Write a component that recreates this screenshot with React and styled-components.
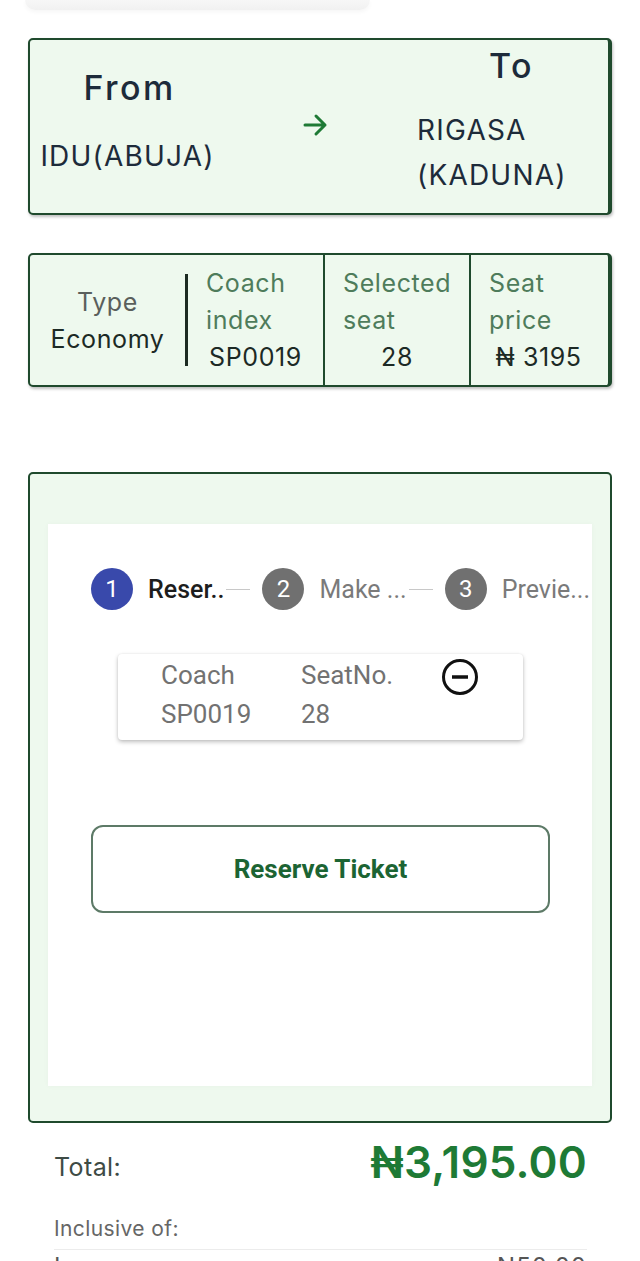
import React from 'react'
import styled, { createGlobalStyle } from 'styled-components'

const GlobalStyle = createGlobalStyle`
  body {
    margin: 0;
    background: #ffffff;
    font-family: "Inter", "Open Sans", sans-serif;
  }
`

const App = () => {
  return (
    <>
      <GlobalStyle />
      <Page>
        <TopShade />

        <RouteCard>
          <FromCol>
            <BigLabel>From</BigLabel>
            <Place>IDU(ABUJA)</Place>
          </FromCol>
          <ArrowCol>
            <svg width="28" height="24" viewBox="0 0 28 24">
              <path d="M3 12 H23 M14 3 L23 12 L14 21" fill="none" stroke="#1e7a35" strokeWidth="3" strokeLinecap="round" strokeLinejoin="round" />
            </svg>
          </ArrowCol>
          <ToCol>
            <ToLabel>To</ToLabel>
            <Place>RIGASA</Place>
            <Place>(KADUNA)</Place>
          </ToCol>
        </RouteCard>

        <InfoCard>
          <TypeCell>
            <TypeLabel>Type</TypeLabel>
            <Value>Economy</Value>
          </TypeCell>
          <Divider />
          <InfoCell w={135}>
            <Label>Coach</Label>
            <Label>index</Label>
            <Value center>SP0019</Value>
          </InfoCell>
          <InfoCell w={144} line>
            <Label>Selected</Label>
            <Label>seat</Label>
            <Value center>28</Value>
          </InfoCell>
          <InfoCell w={135} line>
            <Label>Seat</Label>
            <Label>price</Label>
            <Value center>₦ 3195</Value>
          </InfoCell>
        </InfoCard>

        <ReserveCard>
          <WhiteCard>
            <Stepper>
              <Step>
                <StepDot active>1</StepDot>
                <StepText active>Reser..</StepText>
              </Step>
              <Connector />
              <Step>
                <StepDot>2</StepDot>
                <StepText>Make ...</StepText>
              </Step>
              <Connector />
              <Step>
                <StepDot>3</StepDot>
                <StepText>Previe...</StepText>
              </Step>
            </Stepper>

            <SeatCard>
              <SeatCol w={140}>
                <SeatText>Coach</SeatText>
                <SeatText>SP0019</SeatText>
              </SeatCol>
              <SeatCol w={139}>
                <SeatText>SeatNo.</SeatText>
                <SeatText>28</SeatText>
              </SeatCol>
              <RemoveIcon width="40" height="40" viewBox="0 0 40 40">
                <circle cx="20" cy="20" r="16.5" fill="none" stroke="#111" strokeWidth="3" />
                <path d="M12 20 H28" stroke="#111" strokeWidth="3.5" />
              </RemoveIcon>
            </SeatCard>

            <ReserveButton>Reserve Ticket</ReserveButton>
          </WhiteCard>
        </ReserveCard>

        <Summary>
          <TotalRow>
            <TotalLabel>Total:</TotalLabel>
            <TotalAmount>₦3,195.00</TotalAmount>
          </TotalRow>
          <Inclusive>Inclusive of:</Inclusive>
          <FeeRow>
            <span>Levy</span>
            <span>₦50.00</span>
          </FeeRow>
        </Summary>
      </Page>
    </>
  )
}

export default App

const Page = styled.div`
width: 640px;
height: 1261px;
overflow: hidden;
padding: 0 28px;
box-sizing: border-box;
`

const TopShade = styled.div`
width: 345px;
height: 10px;
margin-left: -3px;
border-radius: 0 0 10px 10px;
background: linear-gradient(#f7f7f7, #f1f1f1);
box-shadow: 0 2px 4px rgba(0,0,0,0.04);
`

const GreenBox = styled.div`
box-sizing: border-box;
background: #eef9ee;
border: 2px solid #1f4a2d;
border-right-width: 4px;
border-radius: 5px;
box-shadow: 1px 2px 3px rgba(0,0,0,0.25);
`

const RouteCard = styled(GreenBox)`
margin-top: 28px;
height: 177px;
display: grid;
grid-template-columns: 195px 192px 1fr;
align-items: center;
padding-bottom: 6px;
`

const FromCol = styled.div`
display: flex;
flex-direction: column;
align-items: center;
`

const BigLabel = styled.div`
font-size: 34px;
line-height: 40px;
color: #1d2b3a;
font-weight: 500;
letter-spacing: 2.4px;
margin-bottom: 26px;
margin-left: 4px;
`

const Place = styled.div`
font-size: 28px;
line-height: 45px;
color: #1d2b3a;
letter-spacing: 1.2px;
white-space: nowrap;
`

const ArrowCol = styled.div`
display: flex;
justify-content: center;
padding-right: 10px;
padding-top: 2px;
`

const ToCol = styled.div`
display: flex;
flex-direction: column;
align-items: flex-start;
margin-top: -4px;
`

const ToLabel = styled(BigLabel)`
margin: 0 0 22px 72px;
`

const InfoCard = styled(GreenBox)`
margin-top: 38px;
height: 134px;
display: flex;
align-items: center;
`

const TypeCell = styled.div`
width: 155px;
display: flex;
flex-direction: column;
align-items: center;
padding-top: 2px;
`

const Divider = styled.div`
width: 3px;
height: 92px;
background: #1c2b22;
`

const InfoCell = styled.div`
box-sizing: border-box;
align-self: stretch;
display: flex;
flex-direction: column;
justify-content: center;
padding-left: 18px;
border-left: ${p => (p.line ? '2px solid #1f4a2d' : 'none')};
width: ${p => (p.line ? p.w + 2 : p.w)}px;
`

const Label = styled.div`
font-size: 25px;
line-height: 37px;
letter-spacing: 0.6px;
color: #4e7c5b;
white-space: nowrap;
`

const TypeLabel = styled(Label)`
color: #5a5f5c;
`

const Value = styled.div`
font-size: 25px;
line-height: 37px;
letter-spacing: 0.6px;
color: #1c2a25;
white-space: nowrap;
align-self: ${p => (p.center ? 'center' : 'auto')};
margin-left: ${p => (p.center ? '-18px' : '0')};
`

const ReserveCard = styled(GreenBox)`
margin-top: 85px;
height: 651px;
border-right-width: 2px;
box-shadow: none;
padding: 50px 18px 35px;
`

const WhiteCard = styled.div`
height: 100%;
background: #ffffff;
box-shadow: 0 0 6px rgba(0,0,0,0.03);
padding: 44px 2px 0 43px;
box-sizing: border-box;
font-family: "Roboto", sans-serif;
`

const Stepper = styled.div`
display: flex;
align-items: center;
height: 42px;
`

const Step = styled.div`
display: flex;
align-items: center;
gap: 15px;
`

const StepDot = styled.div`
width: 42px;
height: 42px;
border-radius: 50%;
background: ${p => (p.active ? '#3949ab' : '#707070')};
color: #fff;
display: flex;
align-items: center;
justify-content: center;
font-size: 24px;
`

const StepText = styled.div`
font-size: 25px;
color: ${p => (p.active ? '#1d1d1d' : '#7a7a7a')};
font-weight: ${p => (p.active ? 500 : 400)};
white-space: nowrap;
`

const Connector = styled.div`
flex: 1;
height: 1px;
background: #c8c8c8;
margin: 0 12px 0 2px;
`

const SeatCard = styled.div`
margin: 44px 0 0 27px;
width: 405px;
height: 86px;
box-sizing: border-box;
background: #fff;
border-radius: 4px;
box-shadow: 0 2px 4px rgba(0,0,0,0.25), 0 0 2px rgba(0,0,0,0.08);
display: flex;
align-items: flex-start;
padding: 2px 0 0 43px;
`

const SeatCol = styled.div`
width: ${p => p.w}px;
`

const SeatText = styled.div`
font-size: 26px;
line-height: 39px;
color: #727272;
`

const RemoveIcon = styled.svg`
margin-top: 1px;
`

const ReserveButton = styled.div`
margin-top: 85px;
width: 459px;
height: 88px;
box-sizing: border-box;
border: 2px solid #5d7a67;
border-radius: 12px;
display: flex;
align-items: center;
justify-content: center;
font-size: 26px;
font-weight: 700;
color: #1c6433;
`

const Summary = styled.div`
padding: 0 25px 0 26px;
`

const TotalRow = styled.div`
display: flex;
justify-content: space-between;
align-items: flex-end;
margin-top: 12px;
`

const TotalLabel = styled.div`
font-size: 25px;
color: #3e4b45;
letter-spacing: 0.4px;
padding-bottom: 7px;
`

const TotalAmount = styled.div`
font-size: 44px;
font-weight: 600;
color: #1e7a35;
letter-spacing: 0.2px;
`

const Inclusive = styled.div`
margin-top: 27px;
font-size: 21px;
letter-spacing: 0.4px;
color: #666;
padding-bottom: 8px;
border-bottom: 1px solid #ececec;
`

const FeeRow = styled.div`
display: flex;
justify-content: space-between;
margin-top: 2px;
font-size: 24px;
line-height: 30px;
letter-spacing: 1px;
color: #555;
`
